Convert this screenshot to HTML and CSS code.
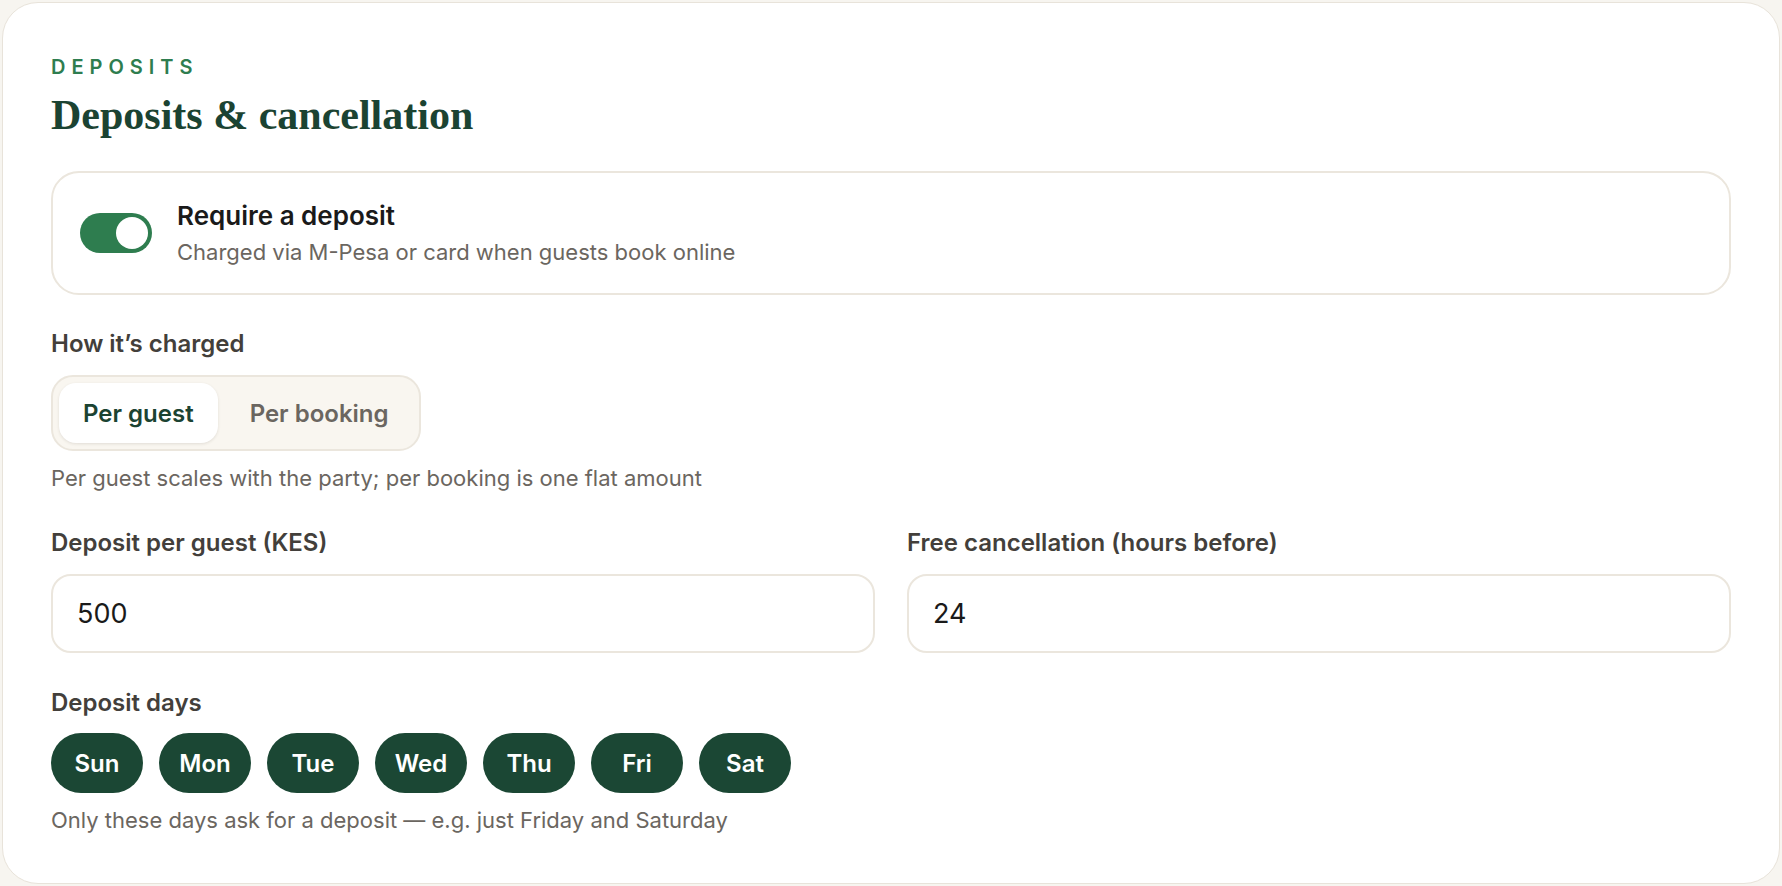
FILE: index.html
```html
<!DOCTYPE html>
<html lang="en">
  <head>
    <meta charset="utf-8">
    <meta name="viewport" content="width=device-width, initial-scale=1.0">
    <title>Deposits &amp; cancellation</title>
    <link rel="stylesheet" href="styles.css">
  </head>
  <body>

    <section class="panel">
      <div class="eyebrow">DEPOSITS</div>
      <h2 class="panel-title">Deposits &amp; cancellation</h2>

      <!-- Deposit switch -->
      <div class="switch-card">
        <div class="toggle is-on"><span class="knob"></span></div>
        <div class="switch-text">
          <div class="switch-title">Require a deposit</div>
          <div class="switch-sub">Charged via M-Pesa or card when guests book online</div>
        </div>
      </div>

      <!-- Charging mode -->
      <div class="field first">
        <label class="field-label">How it’s charged</label>
        <div class="segmented">
          <button class="seg-btn active">Per guest</button>
          <button class="seg-btn">Per booking</button>
        </div>
        <p class="hint">Per guest scales with the party; per booking is one flat amount</p>
      </div>

      <!-- Amount + cancellation -->
      <div class="field-row">
        <div class="field">
          <label class="field-label" for="amount">Deposit per guest (KES)</label>
          <input class="text-input" id="amount" type="text" value="500">
        </div>
        <div class="field">
          <label class="field-label" for="hours">Free cancellation (hours before)</label>
          <input class="text-input" id="hours" type="text" value="24">
        </div>
      </div>

      <!-- Days -->
      <div class="field days-field">
        <label class="field-label">Deposit days</label>
        <div class="days">
          <button class="day on">Sun</button>
          <button class="day on">Mon</button>
          <button class="day on">Tue</button>
          <button class="day on">Wed</button>
          <button class="day on">Thu</button>
          <button class="day on">Fri</button>
          <button class="day on">Sat</button>
        </div>
        <p class="hint">Only these days ask for a deposit — e.g. just Friday and Saturday</p>
      </div>
    </section>

  </body>
</html>
```

FILE: styles.css
```css
* {
  box-sizing: border-box;
}

body {
  margin: 0;
  padding: 2px;
  background-color: #f7f5f0;
  font-family: 'Inter', 'Noto Sans', sans-serif;
  color: #1a1a1a;
}

.panel {
  background-color: #fff;
  border: 1px solid #e8e3da;
  border-radius: 36px;
  padding: 52px 48px 48px;
  min-height: 882px;
}

.eyebrow {
  font-size: 20px;
  line-height: 24px;
  font-weight: 600;
  letter-spacing: 0.3em;
  color: #2e7d4f;
}

.panel-title {
  margin: 11px 0 0;
  font-family: 'Liberation Serif', 'Times New Roman', serif;
  font-size: 42px;
  line-height: 50px;
  font-weight: 700;
  color: #1b4332;
}

.switch-card {
  margin-top: 31px;
  display: flex;
  align-items: center;
  gap: 25px;
  border: 2px solid #ebe6dd;
  border-radius: 28px;
  padding: 27px 27px 27px;
}

.toggle {
  width: 72px;
  height: 40px;
  border-radius: 20px;
  background-color: #c9c4ba;
  padding: 4px;
  display: flex;
  flex-shrink: 0;
}

.toggle.is-on {
  background-color: #2e7d4f;
  justify-content: flex-end;
}

.knob {
  width: 32px;
  height: 32px;
  border-radius: 50%;
  background-color: #fff;
}

.switch-title {
  font-size: 26px;
  line-height: 32px;
  font-weight: 600;
  color: #1a1a1a;
}

.switch-sub {
  margin-top: 6px;
  font-size: 22px;
  line-height: 28px;
  color: #6b6660;
}

.field {
  margin-top: 36px;
  display: flex;
  flex-direction: column;
  align-items: flex-start;
}

.field.first {
  margin-top: 34px;
}

.field-label {
  font-size: 24px;
  line-height: 30px;
  font-weight: 600;
  color: #433f3b;
}

.segmented {
  margin-top: 16px;
  display: flex;
  gap: 8px;
  padding: 6px;
  border: 2px solid #ebe6dd;
  border-radius: 22px;
  background-color: #f9f6f0;
}

.seg-btn {
  height: 60px;
  padding: 0 24px;
  border: 0;
  border-radius: 17px;
  background: transparent;
  font-family: inherit;
  font-size: 24px;
  font-weight: 600;
  color: #6b6660;
  cursor: pointer;
}

.seg-btn.active {
  background-color: #fff;
  color: #1b4332;
  box-shadow: 0 1px 3px rgba(60, 50, 30, 0.12);
}

.hint {
  margin: 13px 0 0;
  font-size: 22px;
  line-height: 28px;
  color: #6b6660;
}

.field-row {
  display: grid;
  grid-template-columns: 1fr 1fr;
  gap: 32px;
}

.field-row .field {
  align-items: stretch;
}

.text-input {
  margin-top: 16px;
  height: 79px;
  padding: 0 24px;
  border: 2px solid #ebe6dd;
  border-radius: 20px;
  background: #fff;
  font-family: inherit;
  font-size: 27px;
  color: #1a1a1a;
  outline: none;
}

.days-field {
  margin-top: 35px;
}

.days {
  margin-top: 15px;
  display: flex;
  gap: 16px;
}

.day {
  width: 92px;
  height: 60px;
  border: 0;
  border-radius: 30px;
  background-color: #eee9df;
  font-family: inherit;
  font-size: 24px;
  font-weight: 600;
  color: #44403c;
  cursor: pointer;
}

.day.on {
  background-color: #1b4734;
  color: #fff;
}

.days + .hint {
  margin-top: 13px;
}
```
